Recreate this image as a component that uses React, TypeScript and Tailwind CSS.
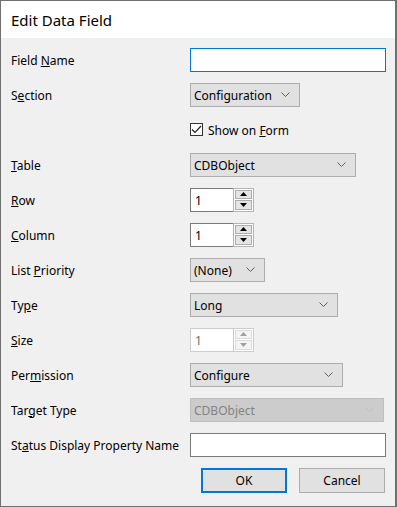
import { ReactNode } from 'react';

const font = { fontFamily: '"Noto Sans", "Liberation Sans", sans-serif' };

const Chevron = ({ color = '#5f5f5f' }: { color?: string }) => (
  <svg width="9" height="5" viewBox="0 0 9 5" className="shrink-0">
    <path d="M0.5 0.5 L4.5 4.5 L8.5 0.5" fill="none" stroke={color} strokeWidth="1" />
  </svg>
);

const Combo = ({ value, width, disabled }: { value: string; width: string; disabled?: boolean }) => (
  <div
    className={`flex h-[24px] items-center justify-between border pl-[3px] pr-[9px] ${width} ${
      disabled ? 'border-[#bfbfbf] bg-[#cccccc] text-[#838383]' : 'border-[#adadad] bg-[#e1e1e1] text-black'
    }`}
  >
    <span className="pt-[2px]">{value}</span>
    <Chevron color={disabled ? '#bfbfbf' : '#5f5f5f'} />
  </div>
);

const Arrow = ({ up, color }: { up?: boolean; color: string }) => (
  <svg width="7" height="4" viewBox="0 0 7 4">
    <path d={up ? 'M0 4 L3.5 0 L7 4 Z' : 'M0 0 L3.5 4 L7 0 Z'} fill={color} />
  </svg>
);

const Spinner = ({ disabled }: { disabled?: boolean }) => (
  <div className="flex h-[24px] w-[64px]">
    <div
      className={`flex w-[43px] items-center border-y border-l bg-white pl-[4px] pt-[2px] ${
        disabled ? 'border-[#cccccc] text-[#6d6d6d]' : 'border-[#7a7a7a] text-black'
      }`}
    >
      1
    </div>
    <div className={`flex w-[21px] flex-col gap-[1px] border bg-white p-[1px] ${disabled ? 'border-[#cccccc]' : 'border-[#b4b4b4]'}`}>
      <div className={`flex flex-1 items-center justify-center border ${disabled ? 'border-[#dcdcdc] bg-[#f4f4f4]' : 'border-[#adadad] bg-[#e5e5e5]'}`}>
        <Arrow up color={disabled ? '#a0a0a0' : '#000'} />
      </div>
      <div className={`flex flex-1 items-center justify-center border ${disabled ? 'border-[#dcdcdc] bg-[#f4f4f4]' : 'border-[#adadad] bg-[#e5e5e5]'}`}>
        <Arrow color={disabled ? '#a0a0a0' : '#000'} />
      </div>
    </div>
  </div>
);

const Row = ({ label, children }: { label?: ReactNode; children: ReactNode }) => (
  <div className="flex h-[35px] items-center">
    <div className="w-[179px] shrink-0 pt-[2px]">{label}</div>
    {children}
  </div>
);

export default function App() {
  return (
    <div style={font} className="h-[507px] w-[397px] border border-r-2 border-[#707070] bg-[#f0f0f0] text-[12px] text-black">
      <div className="flex h-[37px] items-center bg-white pl-[10px] pt-[1px] text-[15px]">Edit Data Field</div>
      <div className="pl-[10px] pt-[4px]">
        <Row label={<>Field <u>N</u>ame</>}>
          <div className="h-[24px] w-[196px] border border-[#0078d7] bg-white" />
        </Row>
        <Row label={<>S<u>e</u>ction</>}>
          <Combo value="Configuration" width="w-[110px]" />
        </Row>
        <Row>
          <div className="flex items-center gap-[5px]">
            <div className="flex h-[13px] w-[13px] items-center justify-center border border-[#333333] bg-white">
              <svg width="11" height="9" viewBox="0 0 11 9">
                <path d="M1 4.5 L4 7.5 L10 1" fill="none" stroke="#222" strokeWidth="1.2" />
              </svg>
            </div>
            <span className="pt-[2px]">Show on <u>F</u>orm</span>
          </div>
        </Row>
        <Row label={<><u>T</u>able</>}>
          <Combo value="CDBObject" width="w-[166px]" />
        </Row>
        <Row label={<><u>R</u>ow</>}>
          <Spinner />
        </Row>
        <Row label={<><u>C</u>olumn</>}>
          <Spinner />
        </Row>
        <Row label={<>List <u>P</u>riority</>}>
          <Combo value="(None)" width="w-[75px]" />
        </Row>
        <Row label={<>Ty<u>p</u>e</>}>
          <Combo value="Long" width="w-[148px]" />
        </Row>
        <Row label={<><u>S</u>ize</>}>
          <Spinner disabled />
        </Row>
        <Row label={<>Per<u>m</u>ission</>}>
          <Combo value="Configure" width="w-[153px]" />
        </Row>
        <Row label={<>Tar<u>g</u>et Type</>}>
          <Combo value="CDBObject" width="w-[194px]" disabled />
        </Row>
        <Row label={<>St<u>a</u>tus Display Property Name</>}>
          <div className="h-[24px] w-[196px] border border-[#7a7a7a] bg-white" />
        </Row>
        <div className="mt-[6px] flex gap-[12px] pl-[190px]">
          <button className="h-[25px] w-[86px] border-2 border-[#0078d7] bg-[#e1e1e1] pt-[1px]">OK</button>
          <button className="h-[25px] w-[86px] border border-[#adadad] bg-[#e1e1e1] pt-[1px]">Cancel</button>
        </div>
      </div>
    </div>
  );
}
